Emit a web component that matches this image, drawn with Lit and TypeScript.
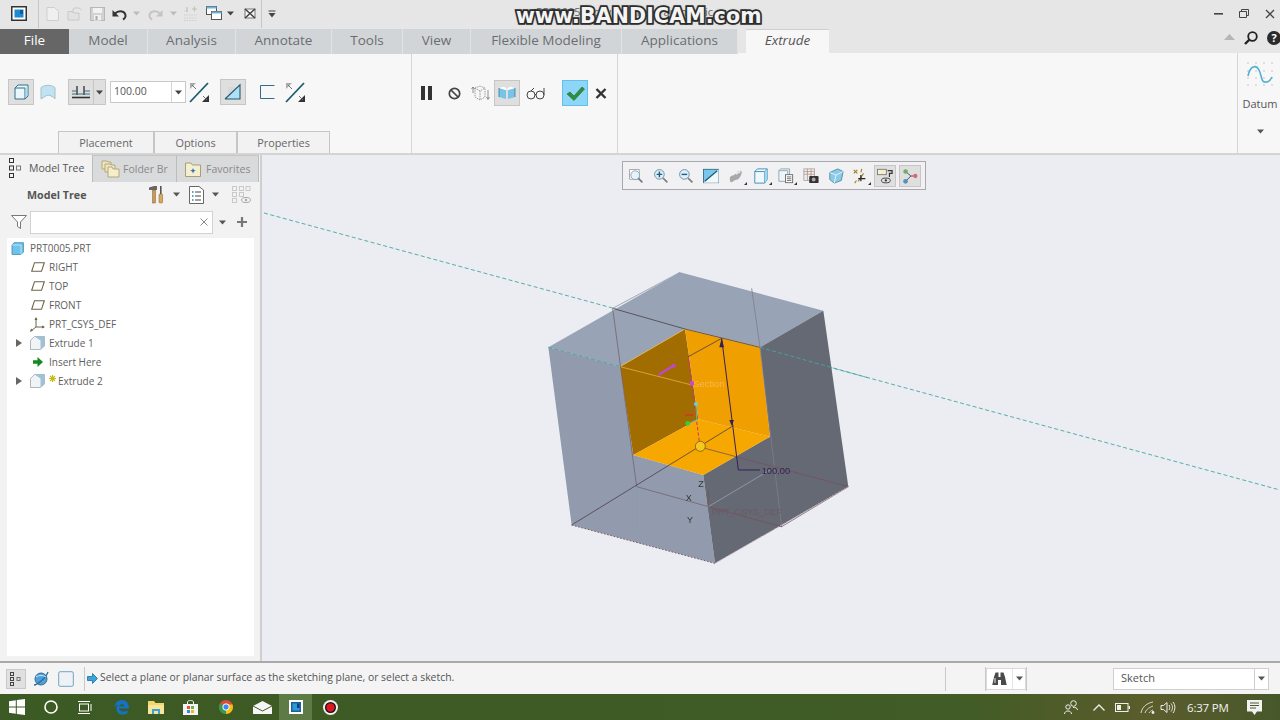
import { LitElement, html, css, svg } from "lit";
import { customElement } from "lit/decorators.js";

const S = (w: number, h: number, b: any) =>
  html`<svg class="ic" width=${w} height=${h} viewBox=${`0 0 ${w} ${h}`}>${b}</svg>`;
const strip = (items: [number, any][]) =>
  items.map(([g, t]) => html`<span class="cell" style="margin-left:${g}px">${t}</span>`);

const caret = (c = "#555", w = 7) => S(w, 5, svg`<path d=${`M0 .5H${w}L${w / 2} 4.5Z`} fill=${c}/>`);
const vdiv = () => html`<span class="vdiv"></span>`;

const appIcon = S(16, 15, svg`<rect x=".75" y=".75" width="14.5" height="13.5" fill="#fff" stroke="#333" stroke-width="1.5"/><rect x="3.5" y="3.5" width="9" height="8" fill="#1d8ad2"/><path d="M9 4h3v4H9z" fill="#0c5d9a"/>`);
const newDoc = S(13, 14, svg`<path d="M1 .5H8.5L12.5 4.5V13.5H1Z" fill="#efefef" stroke="#cfcfcf"/>`);
const openDoc = S(15, 14, svg`<path d="M1 4.5H6L7 6H12V13H1Z" fill="#e2e2e2" stroke="#c9c9c9"/><path d="M5 6L7 1H12L14.5 3" fill="none" stroke="#c9c9c9"/>`);
const save = S(15, 14, svg`<rect x=".5" y=".5" width="14" height="13" fill="#d2d2d2" stroke="#b8b8b8"/><rect x="3" y="1" width="9" height="5" fill="#f2f2f2"/><rect x="4" y="8" width="7" height="5.5" fill="#f0f0f0"/><rect x="5.5" y="9" width="2" height="4" fill="#aaa"/>`);
const undo = (c: string) => S(15, 12, svg`<path d="M3 5.5C7 1.5 14 3 13.5 8.5 13 10 12 11 11 11.5" fill="none" stroke=${c} stroke-width="2"/><path d="M.5 2V8.5H7Z" fill=${c}/>`);
const redo = S(15, 12, svg`<path d="M12 5.5C8 1.5 1 3 1.5 8.5 2 10 3 11 4 11.5" fill="none" stroke="#c4c4c4" stroke-width="2"/><path d="M14.5 2V8.5H8Z" fill="#c4c4c4"/>`);
const regen = S(15, 15, svg`<path d="M1 5h5M1 9h13M1 12h13M1 14.5h13" stroke="#cfcfcf" stroke-dasharray="1.5 1"/><path d="M4 1v5M9 3h5M11.5.5v5" stroke="#c0c0c0" stroke-width="1.2"/>`);
const winsIcon = S(16, 15, svg`<rect x=".5" y=".5" width="10" height="8" fill="#fff" stroke="#555"/><rect x=".5" y=".5" width="10" height="2" fill="#6fb4d8"/><rect x="5.5" y="5.5" width="10" height="8" fill="#fff" stroke="#555"/><rect x="5.5" y="5.5" width="10" height="2" fill="#6fb4d8"/>`);
const closeWin = S(12, 11, svg`<rect x="1" y="1" width="10" height="9" fill="#f7f7f7" stroke="#777"/><path d="M1 1L11 10M11 1L1 10" stroke="#444" stroke-width="1.6"/>`);
const dropBar = S(8, 8, svg`<path d="M.5 1H7.5" stroke="#444"/><path d="M.5 3H7.5L4 7.5Z" fill="#444"/>`);

const solid = S(15, 16, svg`<path d="M1 4L4 1H14V12L11 15H1Z" fill="#e9f6fc" stroke="#2f6f86"/><path d="M11 4V15M1 4H11" stroke="#2f6f86"/><path d="M11.5 4L13.5 2V11.5L11.5 14Z" fill="#a9dbf2"/>`);
const surf = S(16, 15, svg`<path d="M1 2.500C5 -.5 11 -.5 15 2.500V14C13 11.500 11 11 10 10.500 8 10 6 10.500 5 11.500L1 14Z" fill="#bfe3f3" stroke="#a9bfc9"/>`);
const depth = S(20, 15, svg`<path d="M6 1V10M13 1V10" stroke="#222" stroke-width="1.2"/><path d="M1 6H6M13 6H19M1 9H19" stroke="#3a6f80"/><path d="M1 12.5H19" stroke="#333" stroke-width="1.6"/>`);
const flip = S(21, 21, svg`<path d="M1 20L19 1" stroke="#1f5b70" stroke-width="1.8"/><path d="M1 1H7L1 7Z" fill="#aaa"/><path d="M20 20H13L20 13Z" fill="#333"/><path d="M3 3L7 7M14 14L18 18" stroke="#777"/>`);
const thicken = S(18, 16, svg`<rect x="4" y="3" width="7" height="7" fill="#d7d7d7"/><path d="M1 15L16 .8V15Z" fill="#aee0f6"/><path d="M1 15L16 .8V15H1" fill="none" stroke="#24586c" stroke-width="1.1"/>`);
const square = S(15, 14, svg`<path d="M14.5 .5H.5V13.5H14.5" fill="none" stroke="#2f6f86"/>`);

const pause = S(11, 14, svg`<rect x="0" y="0" width="4" height="14" fill="#333"/><rect x="7" y="0" width="4" height="14" fill="#333"/>`);
const ban = S(13, 13, svg`<circle cx="6.5" cy="6.5" r="5.2" fill="none" stroke="#444" stroke-width="1.7"/><path d="M3 3L10 10" stroke="#444" stroke-width="1.7"/>`);
const glass = S(18, 16, svg`<path d="M3 3L8 1L13 3V12L8 15L3 12Z M3 3L8 6L13 3M8 6V15" fill="none" stroke="#888" stroke-width=".8" stroke-dasharray="1.5 .8"/><path d="M1 2V8M16 5V14M14.5 12L16 14.5L17.5 12M1 2L-.5 4M1 2L2.5 4" fill="none" stroke="#777" stroke-width=".8"/>`);
const twins = S(18, 14, svg`<path d="M1 2L8 4V13L1 11Z" fill="#77c4e8"/><path d="M17 2L10 4V13L17 11Z" fill="#77c4e8"/><path d="M1 2L6 .8 9 3 8 4ZM17 2L12 .8 9 3 10 4Z" fill="#fff"/><path d="M1 2V11M17 2V11" stroke="#2f6f86" stroke-width=".7"/>`);
const specs = S(19, 13, svg`<circle cx="5" cy="8" r="4" fill="none" stroke="#444"/><circle cx="14" cy="8" r="4" fill="none" stroke="#444"/><path d="M9 7.5H10M5 4L8 1M18 8V1" fill="none" stroke="#444"/>`);
const check = S(19, 15, svg`<path d="M1 8L4 6L8 10L16 1L18.5 3L8 14.5Z" fill="#2f8f3f" stroke="#1e6b2c" stroke-width=".6"/>`);
const cross = S(12, 11, svg`<path d="M1.5 1L10.5 10M10.5 1L1.5 10" stroke="#333" stroke-width="2.4"/>`);
const datumIc = S(26, 25, svg`<g fill="#999">${[1, 9, 17, 25].map((x) => [1, 9, 16, 23].map((y) => svg`<rect x=${x - 0.5} y=${y - 0.5} width="1" height="1"/>`))}</g><path d="M1 14C3 4 9 2 12 8S14 21 19 20C22 20 24 17 25 15" fill="none" stroke="#4fb1d2" stroke-width="1.6"/>`);

const treeTabIc = S(12, 20, svg`<g fill="none" stroke="#333"><rect x=".5" y=".5" width="4" height="4"/><rect x=".5" y="8" width="4" height="4"/><rect x="7.5" y="8" width="4" height="4" stroke="#777"/><rect x=".5" y="15.5" width="4" height="4"/></g>`);
const folders = S(19, 19, svg`<g stroke="#b2a77d" fill="#efe6bf"><path d="M1 2H6L7 3H10V10H1Z"/><path d="M4 5H9L10 6H14V13H4Z"/><path d="M7 8H11L12 10H18V18H7Z" fill="#f6eecb"/></g>`);
const favs = S(16, 16, svg`<path d="M.5 2H6L7.5 4H15.5V15.5H.5Z" fill="#f5eecf" stroke="#a89f78"/><path d="M8 7L8.8 9 10.8 9.5 8.8 10.5 8 12.5 7.2 10.5 5.2 9.5 7.2 9Z" fill="#2a6fb0"/>`);
const hammer = S(15, 19, svg`<path d="M0 2.5L5 1H8V5H0Z" fill="#666"/><rect x="3.5" y="5" width="3" height="13" fill="#c79a55" stroke="#80622f" stroke-width=".5"/><rect x="11" y="1" width="1.6" height="8" fill="#555"/><rect x="10" y="9" width="3.6" height="9" rx="1" fill="#d8a95c" stroke="#80622f" stroke-width=".5"/>`);
const listIc = S(15, 18, svg`<path d="M.5 .5H10L14.5 4V17.5H.5Z" fill="#fff" stroke="#666"/><path d="M6 6H12M6 10H12M6 14H12" stroke="#444"/><path d="M3 6H4.5M3 10H4.5M3 14H4.5" stroke="#2b7fa8" stroke-width="1.3"/>`);
const ghostTree = S(19, 18, svg`<g fill="none" stroke="#c9c9c9"><rect x=".5" y=".5" width="4" height="4"/><rect x=".5" y="6.5" width="4" height="4"/><rect x=".5" y="12.5" width="4" height="4"/><rect x="7.5" y=".5" width="4" height="4"/><rect x="7.5" y="6.5" width="4" height="4"/><rect x="14" y=".5" width="4" height="4"/><ellipse cx="14" cy="14" rx="4.5" ry="2.5" stroke="#aaa"/></g><circle cx="14" cy="14" r="1.2" fill="#aaa"/>`);
const funnel = S(16, 14, svg`<path d="M.5 .5H15.5L9.5 7V13.5L6.5 11.5V7Z" fill="#fff" stroke="#777"/>`);
const xSmall = S(8, 8, svg`<path d="M.5 .5L7.5 7.5M7.5 .5L.5 7.5" stroke="#888"/>`);
const plus = S(10, 10, svg`<path d="M5 0V10M0 5H10" stroke="#777" stroke-width="2.2"/>`);

const partIc = S(13, 13, svg`<path d="M1 3L3 .7H12.4V10L10 12.4H1Z" fill="#6fc3ea" stroke="#3b87ad" stroke-width=".8"/><path d="M1 3H10V12.4" fill="none" stroke="#c5ecfb" stroke-width=".8"/>`);
const planeIc = S(14, 10, svg`<path d="M3.5 .7H13.3L10.5 9.3H.7Z" fill="none" stroke="#6e6344" stroke-width="1.1"/>`);
const csysIc = S(15, 15, svg`<path d="M6 1V10L1 14M6 10H14" fill="none" stroke="#6e6344" stroke-width="1"/><path d="M6 0L4.5 3H7.5ZM15 10L12 8.5V11.5ZM0 15L1 11.5 3 13.5Z" fill="#6e6344"/>`);
const featIc = S(15, 14, svg`<path d="M.5 4.5L4.5 .5H14.5V10L10.5 13.5H.5Z" fill="#f0f4f6" stroke="#9aa7ae" stroke-width=".8"/><path d="M4.5 .5H14.5V10L10.5 13.5V4.5Z" fill="#9fc3d4"/>`);
const greenArrow = S(10, 10, svg`<path d="M0 3.2H4.5V0L10 5L4.5 10V6.8H0Z" fill="#138a1f"/>`);
const spark = S(7, 7, svg`<path d="M3.5 0V7M0 3.5H7M1 1L6 6M6 1L1 6" stroke="#c5b90d" stroke-width="1.1"/>`);
const expand = html`<span class="exp"></span>`;

const mag = (inner: any) => S(20, 20, svg`<circle cx="8" cy="8" r="6" fill="#dff0fa" stroke="#6f8ea0" stroke-width="1.2"/>${inner}<path d="M12.5 12.5L18 18" stroke="#7c7c7c" stroke-width="2.2"/>`);
const floats = [
  S(20, 20, svg`<rect x="2" y="2" width="12" height="12" fill="#fff" stroke="#999"/><circle cx="9" cy="9" r="5.5" fill="#e5f3fb" stroke="#7b98a9"/><path d="M13 13L18 18" stroke="#777" stroke-width="2"/>`),
  mag(svg`<path d="M8 4.5V11.5M4.5 8H11.5" stroke="#1c5f86" stroke-width="1.8"/>`),
  mag(svg`<path d="M4.5 8H11.5" stroke="#1c5f86" stroke-width="1.8"/>`),
  S(18, 16, svg`<rect x=".5" y=".5" width="17" height="15" fill="#79c7ea" stroke="#2f6f86"/><path d="M.5 15.5H17.5V.5Z" fill="#f1f8fc"/><path d="M2 14L16 2" stroke="#1f5b70" stroke-width="1.4"/>`),
  html`<span class="corner">${S(18, 18, svg`<path d="M2 12C2 8 6 9 8 7S11 3 14 3 15 8 13 11 8 13 6 15 2 16 2 12Z" fill="#a8a8a8"/><path d="M9 7C11 5 13 4 14 4" stroke="#eee" stroke-width="2" fill="none"/>`)}</span>`,
  html`<span class="corner">${S(16, 18, svg`<path d="M1 4L4 1H15V13L12 17H1Z" fill="#eef8fd" stroke="#3b87ad"/><path d="M1 4H12V17M12 4L15 1" fill="none" stroke="#3b87ad"/><path d="M12 4L15 1V13L12 17Z" fill="#9fd8f2"/>`)}</span>`,
  html`<span class="corner">${S(18, 18, svg`<path d="M1 3L3 1H13V15H1Z" fill="#eef5f9" stroke="#88a4b2"/><path d="M1 3H11V15" fill="none" stroke="#88a4b2"/><rect x="8.5" y="7.5" width="8" height="9" fill="#fff" stroke="#666"/><path d="M10 10H15M10 12H15M10 14H15" stroke="#666"/>`)}</span>`,
  S(18, 18, svg`<rect x="1" y="1" width="12" height="13" fill="#eee" stroke="#aaa"/><path d="M1 4H13M1 7H13M5 1V14M9 1V14" stroke="#b08a7a" stroke-width=".8"/><rect x="7" y="9" width="10.5" height="8" rx="1" fill="#333"/><circle cx="12" cy="13" r="2.2" fill="#aaa"/>`),
  S(18, 18, svg`<path d="M2 5L11 1L17 4L15 14L7 17L2 13Z" fill="#8ccbe8" stroke="#4f8aa6"/><path d="M2 5L9 8L17 4M9 8L7 17" stroke="#eaf6fc" fill="none"/>`),
  html`<span class="corner">${S(18, 18, svg`<path d="M2 2L6 6M6 2L2 6" stroke="#a67c1a" stroke-width="1.2"/><path d="M11 1L10 5M5 14L3 17M13 6L7 15" stroke="#a67c1a" stroke-width="1.2"/><path d="M10 8V15M7 12H15" stroke="#222" stroke-width="1.3"/>`)}</span>`,
  html`<span class="tog t22">${S(18, 18, svg`<rect x=".5" y="1.5" width="10" height="6" fill="#f6efcf" stroke="#777"/><path d="M12 3H17V6H14V10" fill="none" stroke="#333" stroke-width="1.3"/><ellipse cx="10" cy="14" rx="5" ry="2.7" fill="none" stroke="#333"/><circle cx="10" cy="14" r="1.3" fill="#333"/>`)}</span>`,
  html`<span class="tog t22">${S(18, 18, svg`<path d="M4 4L10 9L4 15M10 9H15" fill="none" stroke="#444"/><circle cx="4" cy="4" r="2.6" fill="#6fae6a"/><circle cx="4" cy="15" r="2.6" fill="#4f92c4"/><circle cx="15" cy="9" r="2.4" fill="#d46a7a"/>`)}</span>`,
];

const browserIc = S(16, 16, svg`<circle cx="8" cy="8" r="6" fill="#4f9fd8" stroke="#2f6f96"/><path d="M1 14C4 14 13 7 15 1" fill="none" stroke="#2f6f96" stroke-width="1.3"/><path d="M3 6C6 4 10 4 13 6" fill="none" stroke="#cfe9f8"/>`);
const boxIc = S(16, 16, svg`<rect x=".7" y=".7" width="14.6" height="14.6" rx="1.5" fill="#eef2f6" stroke="#6fa4c0"/>`);
const msgArrow = S(11, 11, svg`<path d="M.5 3.5H5.5V.5L10.5 5.5L5.5 10.5V7.5H.5Z" fill="#3aa4dc" stroke="#1d6f9c" stroke-width=".8"/>`);
const binoc = S(15, 14, svg`<path d="M2 5L3.5 .5H6.5V5H8.5V.5H11.5L13 5L14.7 13H9V8H6V13H.3Z" fill="#4a4a4a"/><rect x="2" y="6" width="2" height="5" fill="#999"/>`);

const winLogo = S(16, 16, svg`<path d="M0 2.3L6.8 1.3V7.6H0ZM7.8 1.1L16 0V7.6H7.8ZM0 8.6H6.8V14.8L0 13.8ZM7.8 8.6H16V16L7.8 14.9Z" fill="#fff"/>`);
const cortana = S(14, 14, svg`<circle cx="7" cy="7" r="6" fill="none" stroke="#fff" stroke-width="1.6"/>`);
const taskView = S(15, 13, svg`<rect x="2.5" y="3" width="9" height="7" fill="none" stroke="#fff"/><path d="M1 .5H13M1 12.5H13M14 3V10" stroke="#fff"/>`);
const edgeIc = S(15, 15, svg`<path d="M.2 7C1 2 5 0 8 0c4 0 7 3 7 8.500H5c.2 3 4.500 4 8.500 2v3c-5 2.500-11 1-11-5C2.500 6 3.500 4.500 5 4 3 4.500 1.500 5.500.2 7ZM5 6.200h5.500C10.500 3.500 5.500 3.500 5 6.200Z" fill="#1572c4"/>`);
const explorerIc = S(16, 14, svg`<path d="M0 1H6L7.500 3H16V14H0Z" fill="#f4d76b"/><path d="M0 5H16V14H0Z" fill="#f9e59a"/><path d="M5 14V10H11V14" fill="none" stroke="#3da0d8" stroke-width="2"/>`);
const storeIc = S(15, 15, svg`<path d="M0 4H15V15H0Z" fill="#f4f4f4"/><path d="M4.500 4V2C4.500 0 10.500 0 10.500 2V4" fill="none" stroke="#f4f4f4"/><rect x="4" y="6" width="3" height="3" fill="#e2543b"/><rect x="8" y="6" width="3" height="3" fill="#6cb33f"/><rect x="4" y="10" width="3" height="3" fill="#2e8fd6"/><rect x="8" y="10" width="3" height="3" fill="#f0b72b"/>`);
const chromeIc = S(14, 14, svg`<circle cx="7" cy="7" r="7" fill="#dd4b39"/><path d="M7 7L1 3.500A7 7 0 0 0 7 14Z" fill="#2f9e4f"/><path d="M7 7V14A7 7 0 0 0 13.500 4.500H7Z" fill="#f4c20d"/><circle cx="7" cy="7" r="3.200" fill="#4285f4" stroke="#fff"/>`);
const mailIc = S(19, 13, svg`<path d="M0 5L9.500 0L19 5V13H0Z" fill="#f5f5f5"/><path d="M0 5L9.500 10L19 5" fill="none" stroke="#3c5a22"/>`);
const creoTask = S(14, 14, svg`<rect width="14" height="14" fill="#fff"/><rect x="2" y="2" width="10" height="10" fill="#1d5f98"/><rect x="3.500" y="3.500" width="7" height="7" fill="#2c9ad8"/><path d="M8 3.500h2.500V8H8z" fill="#0d3f6f"/>`);
const recIc = S(15, 15, svg`<circle cx="7.500" cy="7.500" r="7.500" fill="#f2f2f2"/><circle cx="7.500" cy="7.500" r="5.500" fill="#111"/><circle cx="7.500" cy="7.500" r="4.200" fill="#e01722"/>`);
const peopleIc = S(14, 14, svg`<circle cx="9.500" cy="3.500" r="2.800" fill="none" stroke="#eee"/><circle cx="4" cy="7" r="2.200" fill="none" stroke="#eee"/><path d="M.5 14C.5 10 7.500 10 7.500 14M9 7.500C11 7 13.500 8 13.500 10" fill="none" stroke="#eee"/>`);
const trayCaret = S(12, 7, svg`<path d="M.5 6.500L6 1L11.500 6.500" fill="none" stroke="#eee" stroke-width="1.300"/>`);
const battery = S(15, 9, svg`<rect x=".5" y=".5" width="12.500" height="8" fill="none" stroke="#eee"/><rect x="2" y="2" width="4" height="5" fill="#eee"/><rect x="13.500" y="3" width="1.500" height="3" fill="#eee"/>`);
const wifi = S(15, 13, svg`<path d="M1 12C2 6 7 2 13 1M5 12C6 9 8 7 13 5M9 12C9.500 11 11 9.500 13 9" fill="none" stroke="#d8d8d0" stroke-width="1"/><circle cx="13" cy="11.500" r="1.400" fill="#eee"/>`);
const volume = S(15, 13, svg`<path d="M1 4.500H3.500L7 1.500V11.500L3.500 8.500H1Z" fill="none" stroke="#eee"/><path d="M9 4C10 5.500 10 7.500 9 9M11 2.500C13 5 13 8 11 10.500M13 1C15.500 4 15.500 9 13 12" fill="none" stroke="#eee"/>`);
const notif = S(15, 15, svg`<path d="M0 0H15V11.500H10L7.500 15L5 11.500H0Z" fill="#f2f2f2"/><path d="M3 3H12M3 5.500H12M3 8H9" stroke="#4a5a30"/>`);

const tree = [
  { ic: partIc, t: "PRT0005.PRT", root: true },
  { ic: planeIc, t: "RIGHT" },
  { ic: planeIc, t: "TOP" },
  { ic: planeIc, t: "FRONT" },
  { ic: csysIc, t: "PRT_CSYS_DEF" },
  { ic: featIc, t: "Extrude 1", exp: true },
  { ic: greenArrow, t: "Insert Here" },
  { ic: featIc, t: "Extrude 2", exp: true, spark: true },
];

@customElement("app-root")
export class AppRoot extends LitElement {
  static styles = css`
    :host { display: block; width: 1280px; height: 720px; overflow: hidden; position: relative;
      font-family: "Open Sans", "Noto Sans", sans-serif; color: #555; background: #ebedf2; }
    * { box-sizing: border-box; }
    .ic { display: block; flex: none; overflow: visible; }
    .cell { display: flex; flex: none; align-items: center; justify-content: center; }
    .vdiv { display: block; width: 1px; height: 28px; background: #c6c6c6; }
    .page { display: flex; flex-direction: column; height: 720px; }

    .title { flex: none; height: 29px; background: #e6e6e6; display: flex; align-items: center; position: relative; padding-bottom: 2px; }
    .ghost { position: absolute; left: 536px; top: 4px; font-size: 11px; color: #666; white-space: nowrap; }
    .wm { position: absolute; left: 516px; top: 4px; font: 700 20.500px "DejaVu Sans", sans-serif; color: #f4f4f4;
      -webkit-text-stroke: 3.500px #2b2b2b; paint-order: stroke fill; letter-spacing: .15px; white-space: nowrap;
      text-shadow: 0 0 3px #333; }
    .winbtns { margin-left: auto; display: flex; align-items: center; padding-right: 6px; }

    .tabs { flex: none; height: 24px; display: grid; background: #e6e6e6; position: relative;
      grid-template-columns: 69px 79px 88px 96px 71px 68px 151px 124px 83px 1fr; }
    .tab { background: #d2d5d8; border-right: 1px solid #e2e3e5; font-size: 13.500px; color: #6a6d70;
      display: flex; align-items: center; justify-content: center; line-height: 1; padding-bottom: 2px; }
    .tab.app { margin-right: 8px; }
    .tab.file { background: #666; color: #fff; border: 0; }
    .tab.ctx { background: #f7f7f8; border: 0; border-top: 1px solid #cfcfcf; font-style: italic; color: #555; height: 25px; padding-bottom: 2px; }
    .util { display: flex; align-items: center; justify-content: flex-end; gap: 9px; padding-bottom: 7px; }
    .util .up { margin-bottom: 2px; }

    .ribbon { flex: none; height: 102px; background: #f7f7f8; border-bottom: 2px solid #d4d4d4; display: flex; }
    .grp { display: flex; flex-direction: column; border-right: 1px solid #d6d6d6; }
    .g1 { width: 412px; } .g2 { width: 206px; }
    .spacer { flex: 1; border-right: 1px solid #d6d6d6; }
    .rrow { display: flex; align-items: center; height: 26px; margin-top: 26px; }
    .g2 .rrow { margin-top: 27px; }
    .tog { width: 26px; height: 26px; background: #dfdfdf; border: 1px solid #c6c6c6; display: flex; align-items: center; justify-content: center; }
    .tog.t22 { width: 22px; height: 22px; }
    .tog.go { background: #8ed6f7; border-color: #63c0ea; }
    .combo { width: 38px; height: 26px; display: flex; background: #dfdfdf; border: 1px solid #c6c6c6; }
    .combo > span { display: flex; align-items: center; justify-content: center; }
    .combo > span:first-child { width: 25px; border-right: 1px solid #c6c6c6; }
    .combo > span:last-child { flex: 1; }
    .num { width: 76px; height: 22px; background: #fff; border: 1px solid #c9c9c9; display: flex; font-size: 10.500px; color: #555; align-items: center; }
    .num b { flex: 1; font-weight: 400; padding: 0 0 2px 3px; }
    .num i { width: 14px; height: 100%; border-left: 1px solid #d6d6d6; display: flex; align-items: center; justify-content: center; }
    .rtabs { margin-top: auto; margin-left: 58px; display: grid; grid-template-columns: 96px 83px 93px; height: 22px; margin-bottom: 0; }
    .rtab { background: #f2f2f3; border: 1px solid #c6c6c6; border-bottom: 0; font-size: 10.900px; color: #666;
      display: flex; align-items: center; justify-content: center; }
    .datum { width: 42px; display: flex; flex-direction: column; align-items: center; font-size: 11px; color: #555; padding: 9px 0 0 2px; }
    .datum .lbl { margin-top: 9px; line-height: 16px; }
    .datum .dn { margin-top: 17px; }

    .main { flex: 1; display: flex; min-height: 0; border-bottom: 2px solid #a9a9a9; }
    .panel { width: 262px; flex: none; background: #f2f2f3; border-right: 2px solid #cfcfcf; display: flex; flex-direction: column; }
    .ptabs { display: grid; grid-template-columns: 93px 84px 82px; height: 27px; flex: none; }
    .ptab { background: #d9dadc; border-right: 1px solid #bdbdbd; border-top: 1px solid #c6c6c6; font-size: 10.500px; color: #8a8a8a;
      display: flex; align-items: center; gap: 3px; padding: 0 4px 1px 8px; white-space: nowrap; overflow: hidden; }
    .ptab.on { background: #f2f2f3; color: #555; border-top: 0; padding-left: 9px; gap: 8px; }
    .ptab.two { gap: 5px; padding-left: 8px; }
    .phead { height: 25px; flex: none; display: flex; align-items: center; }
    .phead .h { font-size: 10.700px; font-weight: 700; color: #555; margin-left: 27px; width: 122px; padding-top: 1px; }
    .pfilter { height: 31px; flex: none; display: flex; align-items: center; padding-bottom: 1px; }
    .field { width: 183px; height: 23px; background: #fff; border: 1px solid #d2d2d2; display: flex; align-items: center; justify-content: flex-end; padding-right: 4px; margin-left: 3px; }
    .treewrap { flex: 1; margin: 0 6px 5px 7px; background: #fff; padding-top: 1px; }
    .row { height: 18.900px; display: flex; align-items: center; font-size: 10px; color: #5e5e5e; white-space: nowrap; }
    .row .slot { width: 15px; margin-left: 23px; margin-right: 4px; display: flex; justify-content: center; flex: none; }
    .row.root .slot { margin-left: 4px; margin-right: 6px; width: 13px; }
    .exp { width: 0; height: 0; border-left: 6px solid #666; border-top: 4px solid transparent; border-bottom: 4px solid transparent; margin-left: 9px; margin-right: -15px; flex: none; }
    .row .spk { margin-right: 2px; align-self: flex-start; margin-top: 4px; }

    .view { flex: 1; position: relative; background: #ebedf2; overflow: hidden; }
    .model { position: absolute; inset: 0; width: 100%; height: 100%; filter: blur(.3px); }
    .float { position: absolute; left: 360px; top: 6px; width: 304px; height: 29px; background: #f1f1f3; border: 1px solid #a9a9a9;
      display: flex; align-items: center; padding-left: 1px; }
    .float > span { width: 24.900px; height: 27px; display: flex; align-items: center; justify-content: center; position: relative; flex: none; }
    .float svg { width: 16px; height: 16px; }
    .corner { position: relative; display: block; }
    .corner::after { content: ""; position: absolute; right: -3px; bottom: -1px; width: 0; height: 0; border-left: 3px solid transparent; border-bottom: 3px solid #333; }

    .status { flex: none; height: 31px; background: #f4f4f5; display: flex; align-items: center; font-size: 10.400px; color: #555; }
    .sbtn { width: 20px; height: 20px; background: #e0e0e0; border: 1px solid #c9c9c9; display: flex; align-items: center; justify-content: center; }
    .sdiv { display: block; width: 1px; height: 24px; background: #c9c9c9; }
    .msg { margin-left: 2px; margin-bottom: 3px; white-space: nowrap; }
    .sright { margin-left: auto; display: flex; align-items: center; padding-right: 11px; }
    .bino { width: 40px; height: 22px; display: flex; background: #fff; border: 1px solid #d9d9d9; }
    .bino span { display: flex; align-items: center; justify-content: center; }
    .bino span:first-child { width: 26px; border-right: 1px solid #e4e4e4; }
    .bino span:last-child { flex: 1; }
    .sel { width: 156px; height: 22px; background: #fff; border: 1px solid #cfcfcf; display: flex; align-items: center; padding-left: 7px; color: #555; }
    .sel b { flex: 1; font-weight: 400; font-size: 11px; padding-bottom: 2px; }
    .sel i { width: 14px; height: 100%; border-left: 1px solid #cfcfcf; display: flex; align-items: center; justify-content: center; }

    .task { flex: none; height: 26px; background: linear-gradient(90deg, #3c5a24 0%, #415c26 75%, #5b5c2c 90%, #46582a 100%); display: flex; align-items: center; }
    .active { width: 33px; height: 26px; background: #5d7a47; display: flex; align-items: center; justify-content: center; }
    .tray { margin-left: auto; display: flex; align-items: center; padding-right: 18px; }
    .clock { color: #f2f2f2; font-size: 11.500px; width: 40px; letter-spacing: -.2px; white-space: nowrap; }
  `;

  render() {
    return html`<div class="page">
      <div class="title">
        ${strip([[11, appIcon], [11, vdiv()], [7, newDoc], [8, openDoc], [8, save], [7, undo("#333")], [6, caret("#bbb")], [8, redo], [7, caret("#bbb")], [6, regen], [8, winsIcon], [5, caret("#444")], [10, closeWin], [5, vdiv()], [6, dropBar]])}
        <span class="ghost">PRT0005 (Active) - Creo Parametric</span>
        <span class="wm">www.BANDICAM.com</span>
        <div class="winbtns">
          ${strip([[0, S(9, 2, svg`<rect width="9" height="1.600" fill="#444"/>`)], [16, S(10, 9, svg`<path d="M.5 2.500H7.500V8.500H.5ZM2.500 2.500V.5H9.500V6.500H7.500" fill="none" stroke="#444"/>`)], [17, S(8, 8, svg`<path d="M0 0L8 8M8 0L0 8" stroke="#444" stroke-width="1.300"/>`)]])}
        </div>
      </div>

      <div class="tabs">
        <div class="tab file">File</div>
        <div class="tab">Model</div>
        <div class="tab">Analysis</div>
        <div class="tab">Annotate</div>
        <div class="tab">Tools</div>
        <div class="tab">View</div>
        <div class="tab">Flexible Modeling</div>
        <div class="tab app">Applications</div>
        <div class="tab ctx">Extrude</div>
        <div class="util">
          <span class="up">${S(11, 6, svg`<path d="M0 6L5.500 0L11 6Z" fill="#b5b5b5"/>`)}</span>
          <span class="cell">${S(14, 14, svg`<circle cx="8.500" cy="5.500" r="4.300" fill="none" stroke="#222" stroke-width="1.800"/><path d="M5.500 8.500L1 13" stroke="#222" stroke-width="2.400"/>`)}</span>
          <span class="cell">${S(13, 14, svg`<circle cx="7" cy="7" r="7" fill="#2b2b2b"/><text x="7" y="11" font-size="11" font-weight="700" text-anchor="middle" fill="#fff" font-family="Open Sans">?</text>`)}</span>
        </div>
      </div>

      <div class="ribbon">
        <div class="grp g1">
          <div class="rrow">
            ${strip([[8, html`<span class="tog">${solid}</span>`], [6, surf], [12, html`<span class="combo"><span>${depth}</span><span>${caret("#444")}</span></span>`],
              [4, html`<span class="num"><b>100.00</b><i>${caret("#444")}</i></span>`], [3, flip], [10, html`<span class="tog">${thicken}</span>`], [14, square], [10, flip]])}
          </div>
          <div class="rtabs"><div class="rtab">Placement</div><div class="rtab">Options</div><div class="rtab">Properties</div></div>
        </div>
        <div class="grp g2">
          <div class="rrow">
            ${strip([[9, pause], [16, ban], [11, glass], [4, html`<span class="tog">${twins}</span>`], [6, specs], [17, html`<span class="tog go">${check}</span>`], [7, cross]])}
          </div>
        </div>
        <div class="spacer"></div>
        <div class="datum">
          ${datumIc}
          <span class="lbl">Datum</span>
          <span class="dn">${caret("#555")}</span>
        </div>
      </div>

      <div class="main">
        <div class="panel">
          <div class="ptabs">
            <div class="ptab on">${treeTabIc}<span>Model Tree</span></div>
            <div class="ptab">${folders}<span>Folder Br</span></div>
            <div class="ptab two">${favs}<span>Favorites</span></div>
          </div>
          <div class="phead">
            <span class="h">Model Tree</span>
            ${strip([[0, hammer], [9, caret("#555")], [9, listIc], [8, caret("#555")], [13, ghostTree]])}
          </div>
          <div class="pfilter">
            <span class="cell" style="margin-left:11px">${funnel}</span>
            <div class="field">${xSmall}</div>
            ${strip([[6, caret("#555")], [11, plus]])}
          </div>
          <div class="treewrap">
            ${tree.map((r) => html`<div class="row ${r.root ? "root" : ""}">
              ${r.exp ? expand : ""}
              <span class="slot">${r.ic}</span>
              ${r.spark ? html`<span class="spk">${spark}</span>` : ""}
              <span>${r.t}</span>
            </div>`)}
          </div>
        </div>

        <div class="view">
          <svg class="model" viewBox="262 155 1018 507" preserveAspectRatio="xMinYMin slice">
            <path d="M264 213L1280 490" stroke="#46a5a3" stroke-width=".9" stroke-dasharray="4 2.500" fill="none"/>
            <g transform="translate(530 260) scale(.33333)">
              <path d="M55 262L450 37L880 152L690 262L465 207L270 320Z" fill="#98a3b5"/>
              <path d="M55 262L270 320L310 585L520 645L555 910L125 795Z" fill="#919bad"/>
              <path d="M880 152L955 680L555 910L520 645L720 530L690 262Z" fill="#646974"/>
              <path d="M270 320L465 207L505 478L310 585Z" fill="#a16c00"/>
              <path d="M465 207L690 262L720 530L505 478Z" fill="#f09f00"/>
              <path d="M310 585L505 478L720 530L520 645Z" fill="#f6a800"/>
              <path d="M270 320L485 375M465 207L270 320M690 262L465 207" stroke="#f8bd4a" stroke-width="2" fill="none"/>
              <path d="M55 262L270 320M690 262L1020 355" stroke="#46a5a3" stroke-width="2.700" stroke-dasharray="12 7" fill="none"/>
              <g fill="none" stroke-width="2.400">
                <path d="M248 145L320 680L535 740L755 800L955 680" stroke="#75636f"/>
                <path d="M248 145L465 207L690 262" stroke="#4a3f48"/>
                <path d="M125 795L610 497M475 290L575 235" stroke="#4d3c4a"/>
                <path d="M665 85L690 262L755 800" stroke="#7f7f88"/>
                <path d="M450 37L248 145M320 680L320 800" stroke="#8d98aa"/>
                <path d="M525 565L955 680M535 690L535 740L755 800" stroke="#76505f"/>
                <path d="M535 740L720 630" stroke="#9aa2ae"/>
                <path d="M125 795L555 910L955 680" stroke="#caa9b6" stroke-dasharray="7 3"/>
                <path d="M125 795L555 910" stroke="#5a4854" stroke-dasharray="5 5"/>
                <path d="M575 235L625 630H690" stroke="#351f55" stroke-width="3"/>
              </g>
              <path d="M575 235L568 262H582ZM605 497L598 480H612Z" fill="#351f55"/>
              <path d="M475 295L510 560" stroke="#d0307a" stroke-width="3" stroke-dasharray="10 6" fill="none"/>
              <path d="M385 345L430 317" stroke="#bd49c9" stroke-width="7" fill="none"/>
              <circle cx="431" cy="317" r="6" fill="#bd49c9"/>
              <circle cx="486" cy="370" r="7" fill="#c94ac8"/>
              <path d="M498 432L500 480L473 490" stroke="#58b3a8" stroke-width="3" fill="none"/>
              <circle cx="498" cy="432" r="6" fill="#5cd8d0"/>
              <circle cx="473" cy="490" r="7" fill="#2fd03f"/>
              <path d="M465 465H490" stroke="#c8431c" stroke-width="6"/>
              <circle cx="511" cy="559" r="15" fill="#f4c81d" stroke="#7a5a14" stroke-width="2.500"/>
              <text x="695" y="642" font-size="28" fill="#351f55" font-family="Liberation Sans">100.00</text>
              <text x="490" y="380" font-size="28" fill="#f6b94e" font-family="Liberation Sans">Section</text>
              <text x="505" y="680" font-size="27" fill="#333" font-family="Liberation Sans">Z</text>
              <text x="467" y="722" font-size="27" fill="#333" font-family="Liberation Sans">X</text>
              <text x="471" y="789" font-size="27" fill="#333" font-family="Liberation Sans">Y</text>
              <text x="545" y="765" font-size="27" fill="#6f5864" font-family="Liberation Sans">PRT_CSYS_DEF</text>
            </g>
          </svg>
          <div class="float">${floats.map((f) => html`<span>${f}</span>`)}</div>
        </div>
      </div>

      <div class="status">
        ${strip([[6, html`<span class="sbtn">${S(12, 14, svg`<g fill="none" stroke="#444"><rect x=".5" y=".5" width="3" height="3"/><rect x=".5" y="5.500" width="3" height="3"/><rect x="7" y="5.500" width="3" height="3" stroke="#777"/><rect x=".5" y="10.500" width="3" height="3"/></g>`)}</span>`], [7, browserIc], [9, boxIc], [10, html`<span class="sdiv"></span>`], [2, msgArrow]])}
        <span class="msg">Select a plane or planar surface as the sketching plane, or select a sketch.</span>
        <div class="sright">
          ${strip([[0, html`<span class="sdiv"></span>`], [39, html`<span class="sdiv"></span>`], [0, html`<span class="bino"><span>${binoc}</span><span>${caret("#555")}</span></span>`], [0, html`<span class="sdiv"></span>`], [86, html`<span class="sel"><b>Sketch</b><i>${caret("#555")}</i></span>`]])}
        </div>
      </div>

      <div class="task">
        ${strip([[9, winLogo], [19, cortana], [19, taskView], [22, edgeIc], [19, explorerIc], [19, storeIc], [21, chromeIc], [20, mailIc], [7, html`<span class="active">${creoTask}</span>`], [11, recIc]])}
        <div class="tray">
          ${strip([[0, peopleIc], [15, trayCaret], [10, battery], [10, wifi], [5, volume], [12, html`<span class="clock">6:37 PM</span>`], [20, notif]])}
        </div>
      </div>
    </div>`;
  }
}
